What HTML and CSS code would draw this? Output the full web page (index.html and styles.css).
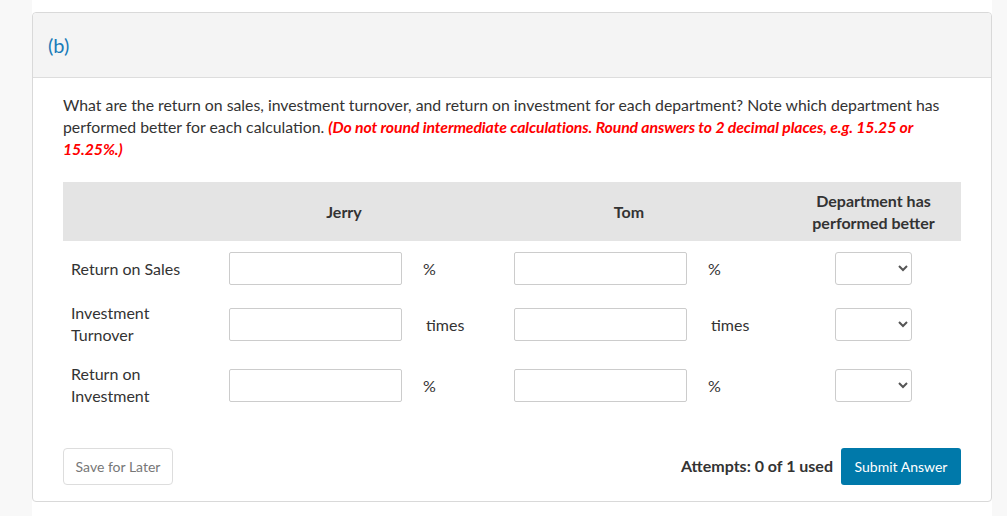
FILE: index.html
```html
<!DOCTYPE html>
<html>
<head>
<meta charset="utf-8">
<link rel="stylesheet" href="styles.css">
</head>
<body>
<div class="column">
  <div class="card">
    <div class="card-head"><span class="part">(b)</span></div>
    <div class="card-body">
      <p class="question">What are the return on sales, investment turnover, and return on investment for each department? Note which department has performed better for each calculation. <em class="note">(Do not round intermediate calculations. Round answers to 2 decimal places, e.g. 15.25 or 15.25%.)</em></p>

      <div class="table">
        <div class="thead">
          <div></div>
          <div class="th">Jerry</div>
          <div></div>
          <div class="th">Tom</div>
          <div></div>
          <div class="th dept">Department has performed better</div>
        </div>

        <div class="row">
          <div class="label">Return on Sales</div>
          <div class="cell"><input class="inp" type="text"></div>
          <div class="unit">%</div>
          <div class="cell"><input class="inp" type="text"></div>
          <div class="unit">%</div>
          <div class="cell center"><select class="sel"><option></option></select></div>
        </div>

        <div class="row">
          <div class="label">Investment Turnover</div>
          <div class="cell"><input class="inp" type="text"></div>
          <div class="unit times">times</div>
          <div class="cell"><input class="inp" type="text"></div>
          <div class="unit times">times</div>
          <div class="cell center"><select class="sel"><option></option></select></div>
        </div>

        <div class="row">
          <div class="label">Return on Investment</div>
          <div class="cell"><input class="inp" type="text"></div>
          <div class="unit">%</div>
          <div class="cell"><input class="inp" type="text"></div>
          <div class="unit">%</div>
          <div class="cell center"><select class="sel"><option></option></select></div>
        </div>
      </div>

      <div class="footer">
        <button class="btn-save">Save for Later</button>
        <div class="submit-group">
          <span class="attempts">Attempts: 0 of 1 used</span>
          <button class="btn-submit">Submit Answer</button>
        </div>
      </div>
    </div>
  </div>
</div>
</body>
</html>
```

FILE: styles.css
```css
* { box-sizing: border-box; }

html, body {
  margin: 0;
  padding: 0;
  height: 100%;
}

body {
  background: #f8f8f8;
  font-family: Lato, "Open Sans", "Liberation Sans", sans-serif;
  color: #333333;
}

.column {
  margin-left: 32px;
  width: 960px;
  min-height: 100%;
  background: #ffffff;
  padding-top: 12px;
}

.card {
  border: 1px solid #d9d9d9;
  border-radius: 4px;
  background: #ffffff;
}

.card-head {
  height: 65px;
  background: #f4f4f4;
  border-bottom: 1px solid #dddddd;
  border-radius: 4px 4px 0 0;
  display: flex;
  align-items: center;
  padding-left: 15px;
}

.part {
  font-size: 20px;
  color: #1a7cb9;
}

.card-body {
  padding: 16px 30px 16px 30px;
}

.question {
  margin: 0;
  font-size: 15.8px;
  line-height: 22px;
  color: #333333;
}

.note {
  color: #ff0000;
  font-weight: 700;
  font-style: italic;
  letter-spacing: -0.1px;
}

.table {
  margin-top: 22px;
}

.thead {
  display: grid;
  grid-template-columns: 157px 248px 37px 248px 37px 171px;
  height: 59px;
  background: #e4e4e4;
  align-items: center;
  margin-bottom: 3px;
}

.th {
  text-align: center;
  font-weight: 700;
  font-size: 16px;
  line-height: 22px;
  color: #333333;
}

.th.dept {
  padding-right: 4px;
}

.row {
  display: grid;
  grid-template-columns: 157px 190px 95px 190px 95px 171px;
  align-items: center;
  padding: 8px 0 9px 0;
}

.label {
  padding-left: 8px;
  padding-right: 20px;
  font-size: 16px;
  line-height: 22px;
}

.cell {
  padding-left: 9px;
  display: flex;
  align-items: center;
}

.cell.center {
  justify-content: center;
  padding-left: 0;
  padding-right: 4px;
}

.inp {
  width: 173px;
  height: 33px;
  border: 1px solid #cccccc;
  border-radius: 2px;
  background: #ffffff;
  font-family: inherit;
  font-size: 16px;
}

.unit {
  padding-left: 13px;
  font-size: 16px;
}

.unit.times {
  padding-left: 16px;
}

.sel {
  width: 77px;
  height: 33px;
  border: 1px solid #cccccc;
  border-radius: 3px;
  background: #ffffff;
  color: #555555;
  font-family: inherit;
  font-size: 16px;
}

.footer {
  margin-top: 32px;
  display: flex;
  justify-content: space-between;
  align-items: center;
}

.btn-save {
  width: 110px;
  height: 37px;
  border: 1px solid #dddddd;
  border-radius: 4px;
  background: #ffffff;
  color: #777777;
  font-family: inherit;
  font-size: 14px;
  padding: 0;
}

.submit-group {
  display: flex;
  align-items: center;
  gap: 8px;
}

.attempts {
  font-size: 16px;
  font-weight: 700;
  color: #333333;
  margin-top: -3px;
}

.btn-submit {
  width: 120px;
  height: 37px;
  border: none;
  border-radius: 3px;
  background: #0079aa;
  color: #ffffff;
  font-family: inherit;
  font-size: 14px;
  padding: 0;
}
```
